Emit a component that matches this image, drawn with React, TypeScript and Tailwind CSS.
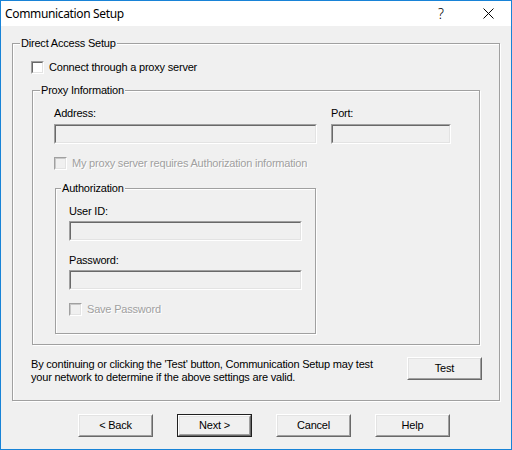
import React from "react";

const F = "font-['Liberation_Sans',Arial,sans-serif] text-[11px] leading-[13px] tracking-[-0.2px]";

function Sunken({ className = "" }: { className?: string }) {
  return (
    <div className={`flex border-t border-l border-[#a0a0a0] border-b border-r border-b-white border-r-white ${className}`}>
      <div className="flex-1 border-t border-l border-[#696969] border-b border-r border-b-[#e3e3e3] border-r-[#e3e3e3] bg-[#f0f0f0]" />
    </div>
  );
}

function Check({ label, disabled }: { label: string; disabled?: boolean }) {
  return (
    <div className="flex items-center h-[13px]">
      <div className="w-[13px] h-[13px] flex border-t border-l border-b border-r border-t-[#a0a0a0] border-l-[#a0a0a0] border-b-white border-r-white">
        <div className={`flex-1 border-t border-l border-b border-r ${disabled ? "border-t-[#c8c8c8] border-l-[#c8c8c8] border-b-[#e3e3e3] border-r-[#e3e3e3] bg-[#f0f0f0]" : "border-t-[#696969] border-l-[#696969] border-b-[#e3e3e3] border-r-[#e3e3e3] bg-white"}`} />
      </div>
      <span className={`ml-[5px] whitespace-nowrap ${disabled ? "text-[#a0a0a0] [text-shadow:1px_1px_0_#fff]" : "text-black"}`}>{label}</span>
    </div>
  );
}

function Group({ label, className = "", labelLeft = "left-[7px]", children }: { label: string; className?: string; labelLeft?: string; children?: React.ReactNode }) {
  return (
    <div className={`relative border border-[#a0a0a0] shadow-[1px_1px_0_#fff,inset_1px_1px_0_#fff] ${className}`}>
      <span className={`absolute -top-[7px] ${labelLeft} bg-[#f0f0f0] px-[1px] whitespace-nowrap`}>{label}</span>
      {children}
    </div>
  );
}

function Btn({ label, def }: { label: string; def?: boolean }) {
  const inner = (
    <div className="flex flex-1 border-t border-l border-b border-r border-t-white border-l-white border-b-[#696969] border-r-[#696969]">
      <div className="flex flex-1 items-center justify-center border-t border-l border-b border-r border-t-[#e3e3e3] border-l-[#e3e3e3] border-b-[#a0a0a0] border-r-[#a0a0a0] bg-[#f0f0f0] text-black">
        {label}
      </div>
    </div>
  );
  return (
    <div className={`flex w-[75px] h-[23px] ${def ? "border border-[#202020]" : ""}`}>{inner}</div>
  );
}

export default function App() {
  return (
    <div className={`w-[512px] h-[450px] border border-[#1883d7] bg-[#f0f0f0] flex flex-col ${F} text-black`}>
      <div className="h-[25px] bg-white flex items-center shrink-0">
        <span className="ml-[4px] font-['Noto_Sans',sans-serif] text-[12px] leading-[16px] tracking-[-0.35px] text-black">Communication Setup</span>
        <div className="flex-1" />
        <span className="w-[12px] mr-[33px] font-['Noto_Sans',sans-serif] text-[14px] leading-[16px] font-light text-black">?</span>
        <svg width="11" height="11" viewBox="0 0 11 11" className="mr-[17px]">
          <path d="M0.5 0.5 L10.5 10.5 M10.5 0.5 L0.5 10.5" stroke="#000" strokeWidth="1" />
        </svg>
      </div>
      <div className="flex flex-col pt-[17px] px-[11px]">
        <Group label="Direct Access Setup" className="h-[358px] flex flex-col">
          <div className="pt-[17px] pl-[18px]">
            <Check label="Connect through a proxy server" />
          </div>
          <Group label="Proxy Information" className="mt-[16px] mx-[19px] h-[255px] flex flex-col">
            <div className="flex pt-[16px] pl-[21px] gap-[14px]">
              <div className="flex flex-col w-[263px]">
                <span>Address:</span>
                <Sunken className="mt-[4px] h-[20px]" />
              </div>
              <div className="flex flex-col w-[120px]">
                <span>Port:</span>
                <Sunken className="mt-[4px] h-[20px]" />
              </div>
            </div>
            <div className="pl-[21px] mt-[13px]">
              <Check label="My proxy server requires Authorization information" disabled />
            </div>
            <Group label="Authorization" labelLeft="left-[5px]" className="mt-[18px] ml-[22px] w-[261px] h-[146px] flex flex-col">
              <div className="flex flex-col pt-[16px] pl-[13px] w-[246px]">
                <span>User ID:</span>
                <Sunken className="mt-[3px] h-[20px]" />
                <span className="mt-[13px]">Password:</span>
                <Sunken className="mt-[3px] h-[20px]" />
                <div className="mt-[13px]">
                  <Check label="Save Password" disabled />
                </div>
              </div>
            </Group>
          </Group>
          <div className="flex items-start pl-[18px] pr-[17px] mt-[13px]">
            <p className="flex-1">
              By continuing or clicking the 'Test' button, Communication Setup may test
              <br />
              your network to determine if the above settings are valid.
            </p>
            <div className="mt-[-1px]">
              <Btn label="Test" />
            </div>
          </div>
        </Group>
        <div className="flex gap-[24px] pl-[66px] mt-[13px]">
          <Btn label="< Back" />
          <Btn label="Next >" def />
          <Btn label="Cancel" />
          <Btn label="Help" />
        </div>
      </div>
    </div>
  );
}
